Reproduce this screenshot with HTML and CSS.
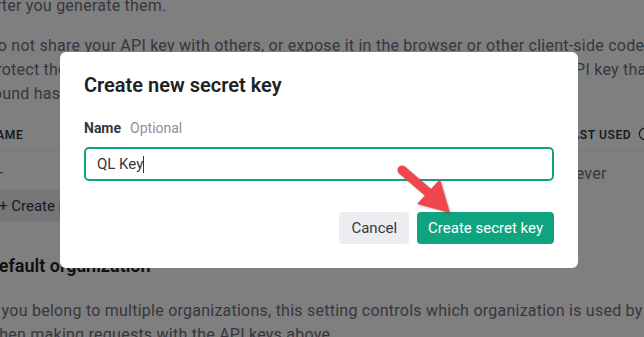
FILE: index.html
```html
<!DOCTYPE html>
<html lang="en">
<head>
    <meta charset="UTF-8">
    <title>API keys</title>
    <link rel="stylesheet" href="styles.css">
</head>
<body>
    <div class="page">
        <p>Your secret API keys are listed below. Please note that we do not display your secret API keys again after you generate them.</p>
        <p>Do not share your API key with others, or expose it in the browser or other client-side code. In order to protect the security of your account, OpenAI may also automatically rotate any API key that we've found has leaked publicly.</p>

        <table class="keys">
            <thead>
                <tr>
                    <th class="col-name">Name</th>
                    <th class="col-key">Key</th>
                    <th class="col-created">Created</th>
                    <th class="col-used">
                        Last used
                        <svg class="info" viewBox="0 0 16 16" width="14" height="14">
                            <circle cx="8" cy="8" r="6.5" fill="none" stroke="currentColor" stroke-width="1.4"/>
                            <path d="M8 7.2v4M8 4.8v.1" stroke="currentColor" stroke-width="1.4" stroke-linecap="round"/>
                        </svg>
                    </th>
                </tr>
            </thead>
            <tbody>
                <tr>
                    <td class="empty-name">—</td>
                    <td>sk-...Qf3T</td>
                    <td>Mar 14, 2023</td>
                    <td>Never</td>
                </tr>
            </tbody>
        </table>
        <button class="create-key">+ Create new secret key</button>

        <h2>Default organization</h2>
        <p>If you belong to multiple organizations, this setting controls which organization is used by default when making requests with the API keys above.</p>
    </div>

    <div class="overlay">
        <div class="modal">
            <h1>Create new secret key</h1>
            <div class="form-group">
                <label><b>Name</b><span>Optional</span></label>
                <div class="input">QL Key<span class="caret"></span></div>
            </div>
            <div class="buttons">
                <button class="btn btn-cancel">Cancel</button>
                <button class="btn btn-primary">Create secret key</button>
            </div>

            <!-- annotation arrow -->
            <svg class="arrow" viewBox="0 0 60 60" width="60" height="60">
                <line x1="6" y1="8" x2="34" y2="32" stroke="#f0474c" stroke-width="9" stroke-linecap="round"/>
                <polygon points="21,42 44,17 54,51" fill="#f0474c"/>
            </svg>
        </div>
    </div>
</body>
</html>
```

FILE: styles.css
```css
body {
    font-family: Roboto, 'Liberation Sans', sans-serif;
    background-color: #fff;
    margin: 0;
    padding: 0;
    height: 337px;
    overflow: hidden;
}

/* page behind the dialog */
.page {
    width: 749px;
    margin: -30px 0 0 -13px;
    color: #6e6e80;
    font-size: 16px;
    line-height: 24px;
    letter-spacing: 0.24px;
}
.page p {
    margin: 0 0 16px;
}
.page h2 {
    margin: 30px 0 19px;
    font-size: 18px;
    line-height: 28px;
    font-weight: 600;
    letter-spacing: 0;
    color: #202123;
}

.keys {
    width: 770px;
    border-collapse: collapse;
    table-layout: fixed;
}
.keys th {
    text-align: left;
    font-size: 12px;
    line-height: 16px;
    font-weight: 600;
    letter-spacing: 0.6px;
    text-transform: uppercase;
    color: #353740;
    padding: 5px 0 7px;
    border-bottom: 1px solid #ececf1;
}
.keys td {
    padding: 11px 0 4px;
}
.keys td.empty-name {
    padding-left: 4px;
}
.col-name { width: 201px; }
.col-key { width: 200px; }
.col-created { width: 176px; }
.info {
    vertical-align: -2px;
    margin-left: 3px;
}

.create-key {
    font-family: inherit;
    font-size: 15px;
    color: #353740;
    background-color: #ececf1;
    border: none;
    border-radius: 4px;
    height: 32px;
    padding: 0 12px;
}

/* dialog */
.overlay {
    position: fixed;
    inset: 0;
    background-color: rgba(0, 0, 0, 0.5);
    padding: 52px 0 0 60px;
}
.modal {
    position: relative;
    width: 518px;
    box-sizing: border-box;
    padding: 20px 24px 24px;
    background-color: #fff;
    border-radius: 6px;
}
h1 {
    margin: 0 0 20px;
    font-size: 20px;
    line-height: 26px;
    font-weight: 600;
    color: #202123;
}
.form-group label {
    display: block;
    font-size: 14px;
    line-height: 20px;
    color: #353740;
    margin-bottom: 9px;
}
.form-group label span {
    color: #8e8ea0;
    margin-left: 9px;
}
.input {
    height: 30px;
    line-height: 30px;
    padding: 0 11px;
    border: 2px solid #10a37f;
    border-radius: 5px;
    font-size: 15px;
    color: #353740;
}
.caret {
    display: inline-block;
    width: 1px;
    height: 17px;
    background-color: #353740;
    vertical-align: -4px;
}
.buttons {
    display: flex;
    justify-content: flex-end;
    gap: 8px;
    margin-top: 31px;
}
.btn {
    font-family: inherit;
    font-size: 15px;
    height: 32px;
    padding: 0 11px;
    border: none;
    border-radius: 4px;
}
.btn-cancel {
    background-color: #ececf1;
    color: #353740;
    padding: 0 12px;
}
.btn-primary {
    background-color: #10a37f;
    color: #fff;
}
.arrow {
    position: absolute;
    left: 336px;
    top: 110px;
    filter: drop-shadow(1px 1px 1px rgba(0, 0, 0, 0.25));
}
```
